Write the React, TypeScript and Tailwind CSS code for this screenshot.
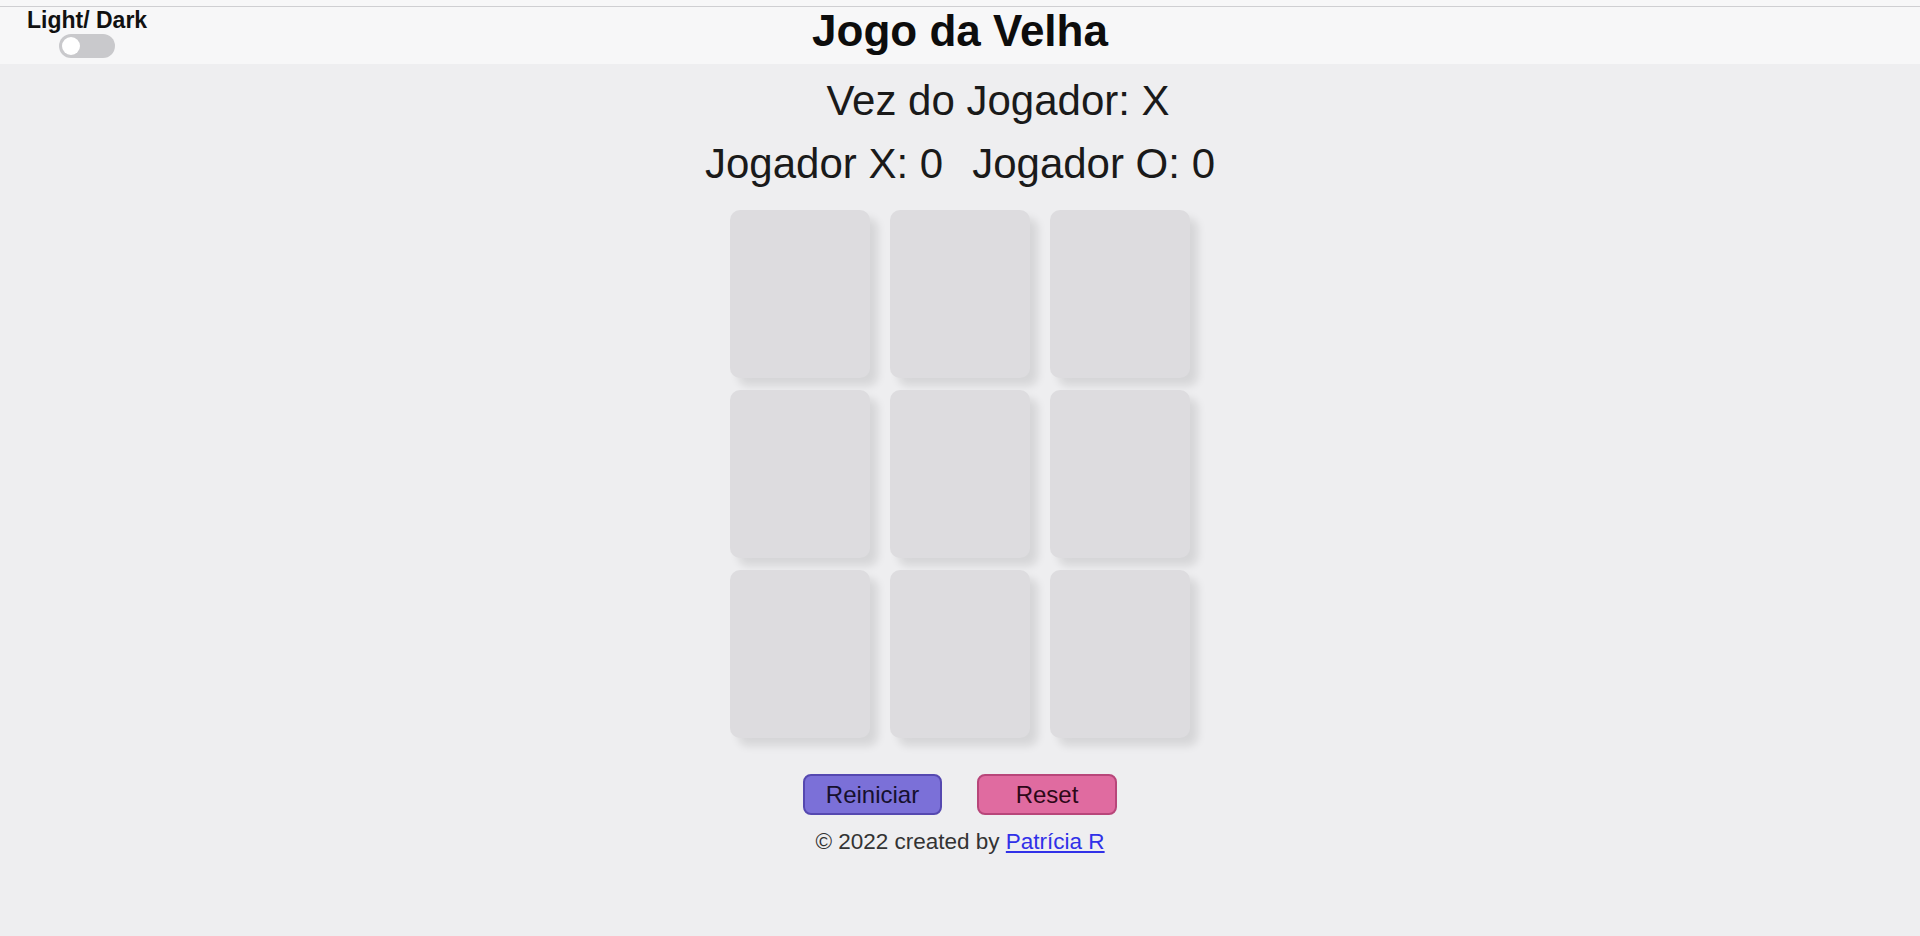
import React, { useState } from "react";

type Cell = "X" | "O" | null;

const Square = ({ value, onClick }: { value: Cell; onClick: () => void }) => (
  <button
    onClick={onClick}
    className="flex h-[168px] w-[140px] items-center justify-center rounded-[10px] bg-[#dddcdf] text-[64px] font-bold text-[#333] shadow-[8px_8px_8px_rgba(0,0,0,0.10)]"
  >
    {value}
  </button>
);

const App = () => {
  const [board, setBoard] = useState<Cell[]>(Array(9).fill(null));
  const [player, setPlayer] = useState<"X" | "O">("X");
  const [score, setScore] = useState({ X: 0, O: 0 });
  const [dark, setDark] = useState(false);

  const play = (i: number) => {
    if (board[i]) return;
    const next = [...board];
    next[i] = player;
    setBoard(next);
    setPlayer(player === "X" ? "O" : "X");
  };

  const restart = () => {
    setBoard(Array(9).fill(null));
    setPlayer("X");
  };

  const reset = () => {
    restart();
    setScore({ X: 0, O: 0 });
  };

  return (
    <div className="min-h-screen bg-[#eeeef0] font-['Liberation_Sans',Arial,sans-serif] text-black">
      <div className="h-[6px] bg-[#f7f7f8]" />
      <div className="h-px bg-[#cfcfd2]" />
      <header className="grid h-[57px] grid-cols-[1fr_auto_1fr] bg-[#f7f7f8]">
        <div className="flex">
          <div className="ml-[27px] mt-px flex flex-col items-center">
            <span className="text-[23px] font-bold leading-[24px] text-[#111]">
              Light/ Dark
            </span>
            <button
              onClick={() => setDark(!dark)}
              className="mt-[2px] flex h-[24px] w-[56px] items-center rounded-full bg-[#c9c9cc] px-[3px]"
            >
              <span className="h-[18px] w-[18px] rounded-full bg-white" />
            </button>
          </div>
        </div>
        <h1 className="pt-[4px] text-[44px] font-bold leading-[40px] text-[#0d0d0d]">
          Jogo da Velha
        </h1>
        <div />
      </header>

      <main className="flex flex-col items-center">
        <p className="mt-[13px] pl-[76px] text-[42px] leading-[48px] text-[#1a1a1a]">
          Vez do Jogador: {player}
        </p>
        <div className="mt-[15px] flex gap-[29px] text-[42px] leading-[48px] text-[#1a1a1a]">
          <span>Jogador X: {score.X}</span>
          <span>Jogador O: {score.O}</span>
        </div>

        <div className="mt-[22px] grid grid-cols-[140px_140px_140px] gap-x-[20px] gap-y-[12px]">
          {board.map((v, i) => (
            <Square key={i} value={v} onClick={() => play(i)} />
          ))}
        </div>

        <div className="mt-[36px] flex gap-[35px]">
          <button
            onClick={restart}
            className="h-[41px] w-[139px] rounded-[8px] border-2 border-[#5548b0] bg-[#7b70d8] text-[24px] text-[#16102e]"
          >
            Reiniciar
          </button>
          <button
            onClick={reset}
            className="h-[41px] w-[140px] rounded-[8px] border-2 border-[#b8467a] bg-[#e06ba0] text-[24px] text-[#2e0818]"
          >
            Reset
          </button>
        </div>

        <p className="mt-[14px] text-[22.5px] leading-[26px] text-[#333]">
          © 2022 created by{" "}
          <a href="#" className="text-[#3030e8] underline">
            Patrícia R
          </a>
        </p>
      </main>
    </div>
  );
};

export default App;
